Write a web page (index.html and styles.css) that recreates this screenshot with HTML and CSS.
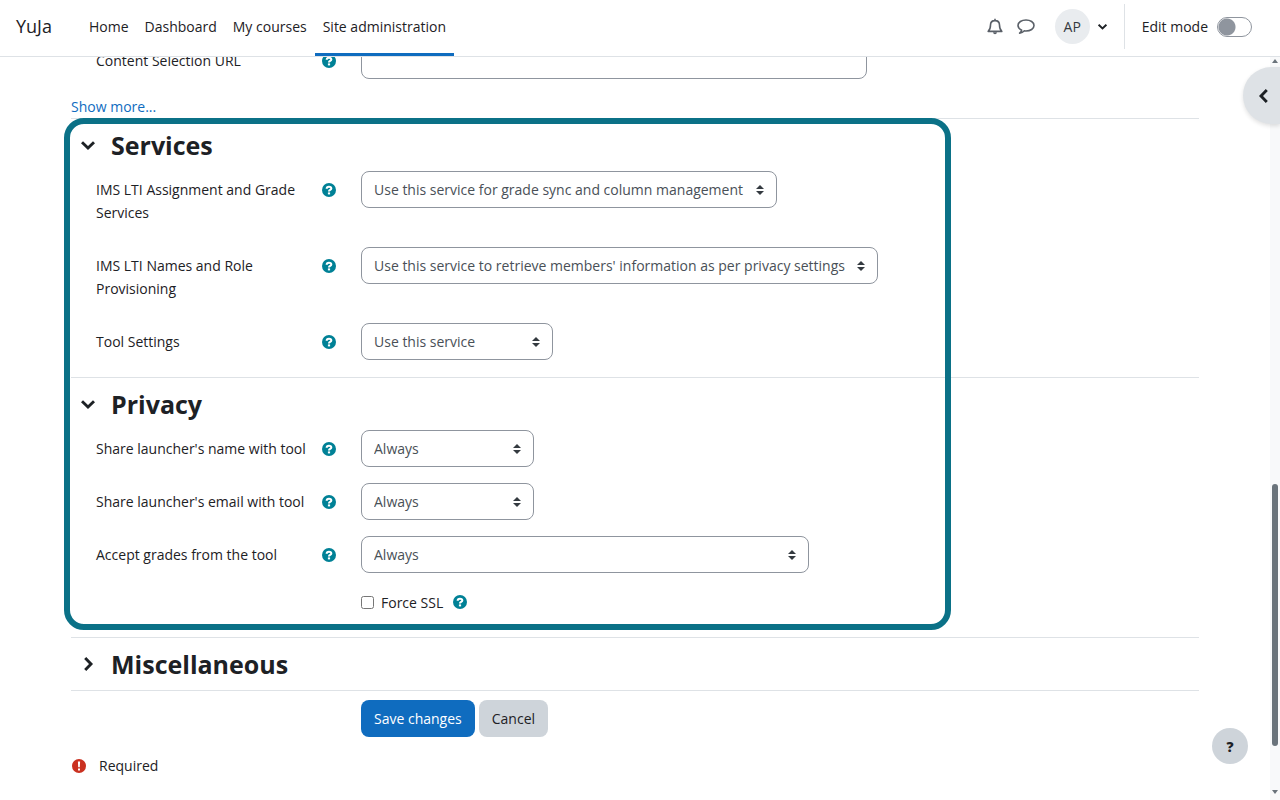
FILE: index.html
```html
<!DOCTYPE html>
<html lang="en">
<head>
<meta charset="utf-8">
<meta name="viewport" content="width=device-width, initial-scale=1">
<title>Site administration | YuJa</title>
<link rel="stylesheet" href="styles.css">
</head>
<body>
<svg class="sprite" aria-hidden="true">
  <symbol id="help" viewBox="0 0 14 14"><circle cx="7" cy="7" r="7" fill="#008196"/><path d="M4.7 5.7C4.7 3.2 9.3 3.1 9.3 5.5C9.3 7 7 6.8 7 8.4" fill="none" stroke="#fff" stroke-width="2.1"/><rect x="5.9" y="9.4" width="2.2" height="2" fill="#fff"/></symbol>
  <symbol id="chevron" viewBox="0 0 14 14"><path d="M1 4.2L7 10L13 4.2" fill="none" stroke="#1d2125" stroke-width="2.9"/></symbol>
</svg>

<header class="navbar">
  <a class="brand" href="#">YuJa</a>
  <nav class="menu">
    <a href="#">Home</a>
    <a href="#">Dashboard</a>
    <a href="#">My courses</a>
    <a class="active" href="#" aria-current="page">Site administration</a>
  </nav>
  <div class="tools">
    <button class="tool" type="button" aria-label="Notifications"><svg width="16" height="18" viewBox="0 0 16 18"><path d="M8 .8V2.6M1.2 13.4C3 11.8 3.5 9.8 3.5 7C3.5 4.2 5.2 2.6 8 2.6S12.5 4.2 12.5 7C12.5 9.8 13 11.8 14.8 13.4Z" fill="none" stroke="#5a6068" stroke-width="1.6" stroke-linejoin="round"/><path d="M6 14.3Q6.3 16.3 8 16.3T10 14.3Z" fill="#5a6068"/></svg></button>
    <button class="tool" type="button" aria-label="Messages"><svg width="18" height="17" viewBox="0 0 18 17"><path d="M4.7 12.2C2.5 11.1 1 9.5 1 7.5C1 4.2 4.6 2 9 2S17 4.2 17 7.5S13.4 13 9 13Q8.2 13 7.4 12.8Q5.5 14.8 2.6 15.2Q4.4 13.8 4.7 12.2Z" fill="none" stroke="#5a6068" stroke-width="1.6" stroke-linejoin="round"/></svg></button>
    <button class="user" type="button" aria-label="User menu"><span class="avatar">AP</span><svg width="9" height="9"><use href="#chevron"/></svg></button>
    <label class="edit"><span>Edit mode</span><input class="switch" type="checkbox"></label>
  </div>
</header>

<div class="viewport">
  <main class="page">
    <form class="settings">
      <div class="row first">
        <div class="name"><label for="url">Content Selection URL</label><button class="help" type="button" aria-label="Help with Content Selection URL"><svg><use href="#help"/></svg></button></div>
        <input class="control w-url" id="url" type="text">
      </div>
      <a class="more" href="#">Show more...</a>

      <div class="marked">
        <section class="section">
          <h2><button class="toggle" type="button" aria-expanded="true"><svg><use href="#chevron"/></svg>Services</button></h2>
          <div class="row">
            <div class="name"><label for="ags">IMS LTI Assignment and Grade Services</label><button class="help" type="button" aria-label="Help with grade services"><svg><use href="#help"/></svg></button></div>
            <select class="control w-ags" id="ags"><option>Use this service for grade sync and column management</option></select>
          </div>
          <div class="row">
            <div class="name"><label for="nrps">IMS LTI Names and Role Provisioning</label><button class="help" type="button" aria-label="Help with role provisioning"><svg><use href="#help"/></svg></button></div>
            <select class="control w-nrps" id="nrps"><option>Use this service to retrieve members' information as per privacy settings</option></select>
          </div>
          <div class="row">
            <div class="name"><label for="tools">Tool Settings</label><button class="help" type="button" aria-label="Help with Tool Settings"><svg><use href="#help"/></svg></button></div>
            <select class="control w-tool" id="tools"><option>Use this service</option></select>
          </div>
        </section>

        <section class="section">
          <h2><button class="toggle" type="button" aria-expanded="true"><svg><use href="#chevron"/></svg>Privacy</button></h2>
          <div class="row">
            <div class="name"><label for="sname">Share launcher's name with tool</label><button class="help" type="button" aria-label="Help with sharing name"><svg><use href="#help"/></svg></button></div>
            <select class="control w-share" id="sname"><option>Always</option></select>
          </div>
          <div class="row">
            <div class="name"><label for="semail">Share launcher's email with tool</label><button class="help" type="button" aria-label="Help with sharing email"><svg><use href="#help"/></svg></button></div>
            <select class="control w-share" id="semail"><option>Always</option></select>
          </div>
          <div class="row">
            <div class="name"><label for="grades">Accept grades from the tool</label><button class="help" type="button" aria-label="Help with accepting grades"><svg><use href="#help"/></svg></button></div>
            <select class="control w-grades" id="grades"><option>Always</option></select>
          </div>
          <div class="check">
            <input id="ssl" type="checkbox"><label for="ssl">Force SSL</label><button class="help" type="button" aria-label="Help with Force SSL"><svg><use href="#help"/></svg></button>
          </div>
        </section>
        <div class="frame" aria-hidden="true"></div>
      </div>

      <section class="section">
        <h2><button class="toggle closed" type="button" aria-expanded="false"><svg><use href="#chevron"/></svg>Miscellaneous</button></h2>
      </section>

      <div class="actions">
        <button class="btn primary" type="submit">Save changes</button>
        <button class="btn" type="button">Cancel</button>
      </div>
      <div class="required"><svg width="14" height="14" viewBox="0 0 14 14"><circle cx="7" cy="7" r="7" fill="#ca3120"/><path d="M5.9 2.5H8.1L7.8 8.3H6.2ZM6 9.4H8V11.4H6Z" fill="#fff"/></svg><span>Required</span></div>
    </form>
  </main>
  <div class="scroll" aria-hidden="true">
    <svg width="8" height="6"><path d="M1 5L4 1L7 5Z" fill="#6a737b"/></svg>
    <div class="track"><div class="thumb"></div></div>
    <svg width="8" height="6"><path d="M1 1L4 5L7 1Z" fill="#6a737b"/></svg>
  </div>
  <button class="drawer" type="button" aria-label="Open block drawer"><svg width="14" height="14"><use href="#chevron"/></svg></button>
  <button class="footer-help" type="button" aria-label="Show footer">?</button>
</div>
</body>
</html>
```
FILE: styles.css
```css
* { box-sizing: border-box; }
body {
  margin: 0;
  height: 100vh;
  display: flex;
  flex-direction: column;
  overflow: hidden;
  background: #fff;
  color: #1d2125;
  font: 14px/23px "Open Sans", "Noto Sans", sans-serif;
}
button, input, select { font: inherit; color: inherit; }
button { padding: 0; border: 0; background: none; }
svg { display: block; flex: none; }
a { text-decoration: none; }
.sprite { position: absolute; width: 0; height: 0; }

.navbar {
  flex: none;
  display: flex;
  height: 57px;
  padding: 0 28px 0 16px;
  border-bottom: 1px solid #dee2e6;
}
.navbar a { color: inherit; display: flex; align-items: center; padding-bottom: 4px; }
.navbar .brand { font-size: 18px; margin-right: 29px; }
.menu { display: flex; }
.navbar .menu a { padding: 1px 8px 2px; border-bottom: 3px solid transparent; }
.navbar .menu .active { border-color: #0f6cbf; }
.tools { display: flex; align-items: center; margin-left: auto; padding-bottom: 3px; }
.tool { margin-right: 14px; }
.user { display: flex; align-items: center; gap: 8px; margin: 0 17px 0 6px; }
.avatar {
  width: 35px;
  height: 35px;
  border-radius: 50%;
  background: #e9ecef;
  color: #343a40;
  line-height: 35px;
}
.edit {
  display: flex;
  align-items: center;
  gap: 9px;
  height: 45px;
  padding-left: 17px;
  border-left: 1px solid #dee2e6;
}
.switch {
  appearance: none;
  width: 35px;
  height: 20px;
  margin: 0;
  border: 1px solid #8f959e;
  border-radius: 10px;
  background: radial-gradient(circle at 9px 9px, #8f959e 8px, transparent 9px);
}

.viewport { position: relative; flex: 1; min-height: 0; display: flex; }
.page { flex: 1; min-width: 0; overflow: hidden; padding: 0 71px; }
.settings { margin-top: -15px; }
.row {
  display: grid;
  grid-template-columns: 240px minmax(0, 1fr);
  column-gap: 25px;
  align-items: start;
  padding-left: 25px;
  margin-bottom: 16px;
}
.name { display: flex; justify-content: space-between; gap: 8px; padding: 7px 0; }
.first .name { padding-bottom: 0; }
.help { height: 23px; display: flex; align-items: center; }
.help svg { width: 14px; height: 14px; }
.control {
  height: 37px;
  max-width: 100%;
  padding: 0 28px 0 12px;
  border: 1px solid #8f959e;
  border-radius: 8px;
  background-color: #fff;
  color: #495057;
}
select.control {
  appearance: none;
  background-image: url("data:image/svg+xml,%3Csvg xmlns='http://www.w3.org/2000/svg' viewBox='0 0 8 10'%3E%3Cpath fill='%23343a40' d='M0 4L4 0L8 4ZM0 6L4 10L8 6Z'/%3E%3C/svg%3E");
  background-repeat: no-repeat;
  background-position: right 12px center;
  background-size: 8px 10px;
}
.w-url { width: 506px; }
.w-ags { width: 416px; }
.w-nrps { width: 517px; }
.w-tool { width: 192px; }
.w-share { width: 173px; }
.w-grades { width: 448px; }
.more { display: block; color: #0f6cbf; }

.marked { position: relative; }
.frame {
  position: absolute;
  top: 0;
  left: -7px;
  bottom: 7px;
  width: 887px;
  border: 6px solid #0b7187;
  border-radius: 20px;
  pointer-events: none;
}
.section { border-top: 1px solid #dee2e6; display: flow-root; }
.section + .section { margin-top: 1px; }
h2 { margin: 0; height: 52px; padding-top: 9px; font-size: 25px; line-height: 34px; }
.toggle { display: flex; align-items: center; gap: 16px; padding-left: 10px; font-weight: 700; }
.toggle svg { width: 14px; height: 14px; }
.closed svg { transform: rotate(-90deg); }
.check { display: flex; align-items: center; height: 48px; padding: 0 0 22px 290px; }
.check input { width: 13px; height: 13px; margin: 0 7px 0 0; }
.check .help { margin-left: 10px; }

.actions { display: flex; gap: 4px; padding: 9px 0 0 290px; border-top: 1px solid #dee2e6; }
.btn { height: 37px; padding: 0 13px; border-radius: 8px; background: #ced4da; }
.primary { background: #0f6cbf; color: #fff; }
.required { display: flex; align-items: center; gap: 13px; padding: 17px 0 0 1px; }

.scroll {
  flex: none;
  display: flex;
  flex-direction: column;
  align-items: center;
  width: 10px;
  padding: 1px 0 5px;
  background: #f8f9fa;
}
.track { flex: 1; display: flex; flex-direction: column; width: 6px; padding: 420px 0 43px; }
.thumb { flex: 1; border-radius: 3px; background: #6a737b; }
.drawer {
  position: absolute;
  top: 10px;
  right: 0;
  width: 37px;
  height: 57px;
  padding-left: 14px;
  border-radius: 29px 0 0 29px;
  background: #dee2e6;
  box-shadow: 0 2px 4px rgba(0, 0, 0, .12);
}
.drawer svg { transform: rotate(90deg); }
.footer-help {
  position: absolute;
  right: 32px;
  bottom: 36px;
  width: 36px;
  height: 36px;
  border-radius: 50%;
  background: #ced4da;
  font-weight: 800;
}
```
